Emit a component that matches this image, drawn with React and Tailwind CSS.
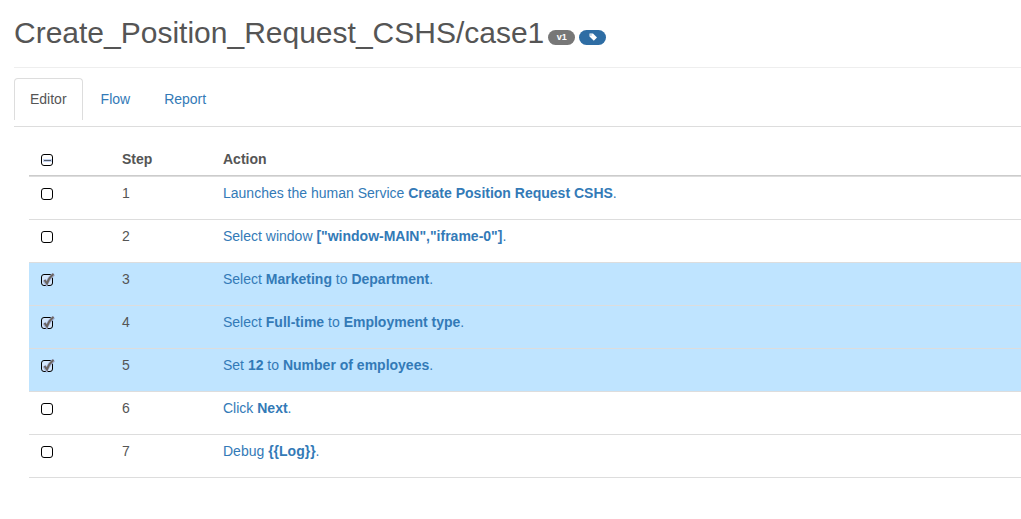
import { useState } from "react";

const steps = [
  { id: 1, parts: ["Launches the human Service ", <b>Create Position Request CSHS</b>, "."] },
  { id: 2, parts: ["Select window ", <b>["window-MAIN","iframe-0"]</b>, "."] },
  { id: 3, parts: ["Select ", <b>Marketing</b>, " to ", <b>Department</b>, "."] },
  { id: 4, parts: ["Select ", <b>Full-time</b>, " to ", <b>Employment type</b>, "."] },
  { id: 5, parts: ["Set ", <b>12</b>, " to ", <b>Number of employees</b>, "."] },
  { id: 6, parts: ["Click ", <b>Next</b>, "."] },
  { id: 7, parts: ["Debug ", <b>{"{{Log}}"}</b>, "."] },
];

const tabs = ["Editor", "Flow", "Report"];

function Checkbox({ label, checked, mixed, onChange }) {
  return (
    <label className="relative block size-3">
      <input
        type="checkbox"
        aria-label={label}
        checked={checked}
        onChange={onChange}
        className="block size-3 appearance-none rounded-[3px] border border-black bg-white checked:bg-[#d3e6fb]"
      />
      {(checked || mixed) && (
        <svg viewBox="0 0 14 14" className="pointer-events-none absolute -top-px left-0 size-3.5" fill="none">
          {mixed ? (
            <>
              <path d="M2 7.5h9" stroke="#c4d3f0" strokeWidth="3" />
              <path d="M3 7.5h7" stroke="#555b68" strokeWidth="1" />
            </>
          ) : (
            <>
              <path d="M3 7 5.5 10.5Q8 4.5 13 1" stroke="#a3b1d6" strokeWidth="3.6" />
              <path d="M3.5 7 6 10.5Q8 4.5 12.5 1" stroke="#6b6560" strokeWidth="2" />
            </>
          )}
        </svg>
      )}
    </label>
  );
}

export default function App() {
  const [tab, setTab] = useState("Editor");
  const [selected, setSelected] = useState([3, 4, 5]);
  const all = selected.length === steps.length;
  const toggle = (id) =>
    setSelected((s) => (s.includes(id) ? s.filter((n) => n !== id) : [...s, id]));

  return (
    <main className="min-h-screen bg-white pt-[15px] pl-3.5 font-['Liberation_Sans',Arial,sans-serif] text-sm text-[#555]">
      <header className="flex items-center gap-1 border-b border-[#eee] pb-4">
        <h1 className="text-[30px] leading-9">Create_Position_Request_CSHS/case1</h1>
        <span className="mt-2 flex h-[15px] w-[27px] items-center justify-center rounded-full bg-[#777] text-[9px] leading-none font-bold text-white">
          v1
        </span>
        <button
          type="button"
          aria-label="Tag"
          className="mt-2 flex h-[15px] w-[27px] items-center justify-center rounded-full bg-[#2e6da4]"
        >
          <svg viewBox="0 0 8 8" className="size-2">
            <path
              fillRule="evenodd"
              d="M.5.5h3.500L8 4.500 4.800 7.700.5 3.500zM1.500 1.500v.9h.9v-.9z"
              fill="#fff"
            />
          </svg>
        </button>
      </header>

      <nav className="mt-2.5 flex border-b border-[#ddd] pb-1.5">
        {tabs.map((name) => (
          <a
            key={name}
            href={"#" + name.toLowerCase()}
            aria-current={tab === name ? "page" : undefined}
            onClick={() => setTab(name)}
            className={
              "mr-0.5 rounded-t border border-b-0 px-[15px] py-2.5 leading-[21px] " +
              (tab === name ? "border-[#ddd] text-[#555]" : "border-transparent text-[#337ab7]")
            }
          >
            {name}
          </a>
        ))}
      </nav>

      <section className="pt-3.5 pl-[15px]">
        <table className="w-full table-fixed border-separate border-spacing-0 border-b border-[#ddd] text-left">
          <colgroup>
            <col className="w-[85px]" />
            <col className="w-[101px]" />
            <col />
          </colgroup>
          <thead>
            <tr className="h-[35px] align-top">
              <th className="border-b border-[#ccc] px-3 pt-[13px]">
                <Checkbox
                  label="Select all steps"
                  checked={all}
                  mixed={selected.length > 0 && !all}
                  onChange={() => setSelected(all ? [] : steps.map((s) => s.id))}
                />
              </th>
              <th className="border-b border-[#ccc] px-2 pt-2">Step</th>
              <th className="border-b border-[#ccc] px-2 pt-2">Action</th>
            </tr>
          </thead>
          <tbody>
            {steps.map(({ id, parts }) => (
              <tr key={id} className={"h-[43px] align-top " + (selected.includes(id) ? "bg-[#bfe4ff]" : "")}>
                <td className="border-t border-[#ddd] px-3 pt-[11px]">
                  <Checkbox label={"Select step " + id} checked={selected.includes(id)} onChange={() => toggle(id)} />
                </td>
                <td className="border-t border-[#ddd] px-2 pt-1.5">{id}</td>
                <td className="border-t border-[#ddd] px-2 pt-1.5">
                  <a href={"#step-" + id} className="text-[#337ab7]">
                    {parts.map((part, i) => (
                      <span key={i}>{part}</span>
                    ))}
                  </a>
                </td>
              </tr>
            ))}
          </tbody>
        </table>
      </section>
    </main>
  );
}
